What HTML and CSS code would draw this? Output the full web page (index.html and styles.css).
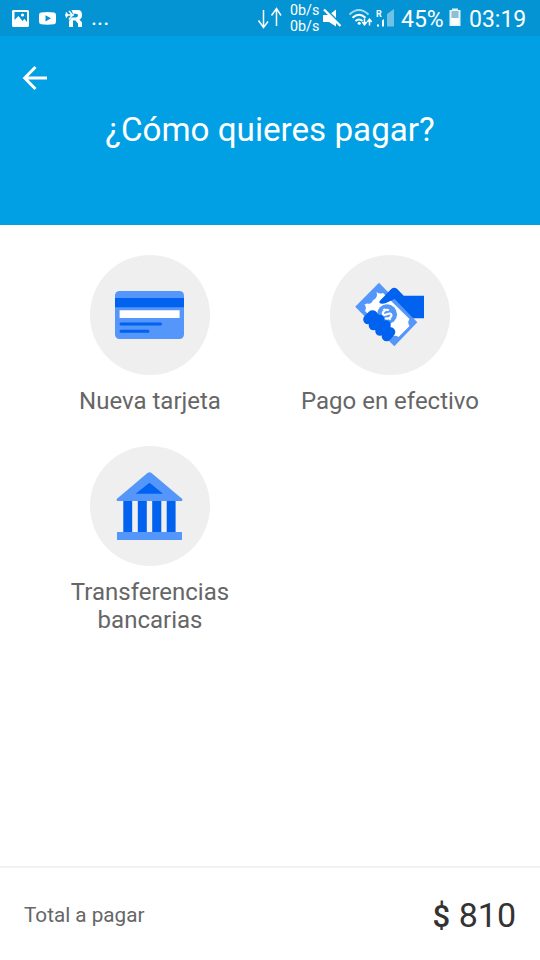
FILE: index.html
```html
<!DOCTYPE html>
<html lang="es">
<head>
  <meta charset="UTF-8" />
  <meta name="viewport" content="width=device-width, initial-scale=1.0"/>
  <title>¿Cómo quieres pagar?</title>
  <link rel="stylesheet" href="styles.css">
</head>
<body>
  <div class="status-bar">
    <svg class="status-left" width="90" height="36" viewBox="0 0 90 36" fill="#fff">
      <path fill-rule="evenodd" d="M13 10h15l1 1v15l-1 1H13l-1-1V11zM14.500 12v8l4-4 4 5 2-2 2.500 3V12z"/>
      <circle cx="22.500" cy="15" r="1.600"/>
      <path fill-rule="evenodd" d="M41 12.500q6.500-1 13 0 2 .3 2 2.500v6.500q0 2.500-2 2.800-6.500.8-13 0-2-.3-2-2.800V15q0-2.200 2-2.500zM45.500 15.200v6.300l5.500-3.200z"/>
      <path d="M71.500 10h6.500q4 0 4 5 0 3.500-2.500 4.500l2.500 3V27h-4v-3.500l-2.500-3h-2.500V27H69v-6l3-3.500h4q2-.3 2-2t-2-1.800h-3z"/>
      <path d="M65 15h9M69 11l3.500 4-3.500 4.500M66 12.500l1.500 2.500-1.500 2.500" fill="none" stroke="#fff" stroke-width="1.500"/>
    </svg>
    <span class="dots">...</span>

    <svg class="arrows" width="25" height="36" viewBox="0 0 25 36" fill="none" stroke="#fff" stroke-width="1.500">
      <path d="M6.500 10v17.500M1.500 20.500l5 7 4.500-6M19.500 26V9.500M14.500 15.500l5-7 4.500 7"/>
    </svg>
    <div class="speed"><span>0b/s</span><span>0b/s</span></div>
    <svg class="signals" width="74" height="36" viewBox="0 0 74 36">
      <path d="M2 15h6l7-5.500v17L8 22H2z" fill="#fff"/>
      <path d="M4 8.500l17 17" stroke="#0494d3" stroke-width="2"/>
      <path d="M3 9.500l16.500 16.500" stroke="#fff" stroke-width="2.300"/>
      <g fill="none" stroke="#fff" stroke-width="1.900">
        <path d="M28.500 14.500q9.500-9 19 0" stroke="#a5daf1"/>
        <path d="M31.500 17.700q6.500-6 13 0M34.500 21q3.500-3 7 0"/>
      </g>
      <circle cx="38.200" cy="23.300" r="1.500" fill="#fff"/>
      <path d="M43.500 18.500v6M41.300 22l2.200 2.800 2.200-2.800M48.500 25.500v-6M46.300 22l2.200-2.800 2.200 2.800" fill="none" stroke="#fff" stroke-width="1.500"/>
      <path d="M66 26.500V14l7-5v17.500z" fill="#6fc1e6"/>
      <path d="M56 26.500v-2h2v2zM61 26.500v-6l2-1.500v7.500z" fill="#fff"/>
      <text class="roaming" x="55" y="16.500">R</text>
    </svg>
    <span class="percent">45%</span>
    <svg class="battery" width="12" height="36" viewBox="0 0 12 36">
      <path d="M3 8.500h6v1.500h2.500v16H.5V10H3z" fill="#e6f5fb"/>
      <path d="M2.500 11h7v7h-7z" fill="#8ec0d4"/>
      <path d="M2.500 18h7v6.500h-7z" fill="#fff"/>
    </svg>
    <span class="time">03:19</span>
  </div>

  <header class="header">
    <a class="back" href="#" aria-label="Volver">
      <svg width="26" height="26" viewBox="0 0 26 26" fill="none" stroke="#fff" stroke-width="3">
        <path d="M25 13H3M13.500 2L2.700 13l10.800 11"/>
      </svg>
    </a>
    <h1>¿Cómo quieres pagar?</h1>
  </header>

  <main class="options">
    <div class="option">
      <svg class="icon" viewBox="0 0 120 120">
        <rect x="25" y="36" width="69" height="48" rx="4.500" fill="#5596fa"/>
        <path d="M25 43h69v9.300H25z" fill="#0062ef"/>
        <path d="M29.600 55.300h60V63h-60z" fill="#fff"/>
        <path d="M31 68.900h39.500M31 76.300h27" stroke="#0062ef" stroke-width="3" stroke-linecap="round"/>
      </svg>
      <span>Nueva tarjeta</span>
    </div>

    <div class="option">
      <svg class="icon" viewBox="0 0 120 120">
        <path d="M49 27.700L25.200 51.700l39.100 39.600 23-24z" fill="#5596fa"/>
        <path d="M46.500 37q3 2.500 6.500 1L79.500 64q-2.500 3.500 0 7L68.500 82q-3.500-2.500-7 0L35 56q2-3.500-.5-6.500l2.500-1q4 1 5-1.500t3-3q3-3 1.500-7z" fill="#fff"/>
        <circle cx="57" cy="59.200" r="10" fill="#5596fa"/>
        <g transform="translate(57 59.200) rotate(-32)" fill="none" stroke="#fff" stroke-width="2.100">
          <path d="M3.500-2.200Q2.800-4.300 0-4.300q-3.300 0-3.300 2.200Q-3.300-.5 0 0q3.500.6 3.500 2.200Q3.500 4.400 0 4.400q-2.800 0-3.500-2.200M0-4.300v-2.200M0 4.400v2.200"/>
        </g>
        <path d="M49.700 46l11.500-12q3-2.500 6 0l6.500 6.700H94v22.600H83L64.500 44 56 48q-3 1-5.500.5-2-1-.8-2.500z" fill="#0062ef"/>
        <path d="M42 60l18 19" stroke="#0062ef" stroke-width="10"/>
        <path d="M38 64.500l4.500-4.500M43.500 70.500l6-6M50 76l6-6M56.500 81.500l4-4.500" stroke="#0062ef" stroke-width="9.600" stroke-linecap="round"/>
      </svg>
      <span>Pago en efectivo</span>
    </div>

    <div class="option">
      <svg class="icon" viewBox="0 0 120 120">
        <path d="M57.800 26.800q1.700-1.300 3.400 0L92 52.800q1 1 0 2.300H27q-1-1.300 0-2.300z" fill="#5596fa"/>
        <path d="M59.500 36.700L73 47.700H45.700z" fill="#0062ef"/>
        <path d="M33.300 55.100h8.900V86h-8.900zM47.800 55.100h9V86h-9zM62.200 55.100h9.100V86h-9.100zM76.700 55.100h8.900V86h-8.900z" fill="#0062ef"/>
        <path d="M27 86h65v8H27z" fill="#5596fa"/>
      </svg>
      <span>Transferencias bancarias</span>
    </div>
  </main>

  <footer class="total">
    <span class="total-label">Total a pagar</span>
    <span class="total-amount"><b>$</b> 810</span>
  </footer>
</body>
</html>
```
FILE: styles.css
```css
* {
  box-sizing: border-box;
}

body {
  font-family: Roboto, sans-serif;
  background: #fff;
  color: #666;
  display: flex;
  flex-direction: column;
  height: 100vh;
  margin: 0;
  overflow: hidden;
}

svg {
  display: block;
  flex-shrink: 0;
}

.status-bar {
  display: flex;
  align-items: center;
  height: 36px;
  flex-shrink: 0;
  background: #0494d3;
  color: #fff;
  font-size: 23px;
  line-height: 36px;
  white-space: nowrap;
}

.dots {
  width: 20px;
  margin-left: 1px;
}

.arrows {
  margin-left: 146px;
}

.speed {
  display: flex;
  flex-direction: column;
  width: 32px;
  margin-left: 8px;
  font-size: 14.3px;
  line-height: 16px;
}

.signals {
  margin-left: -1px;
}

.roaming {
  fill: #fff;
  font-size: 9px;
  font-weight: bold;
}

.percent {
  width: 47px;
  margin-left: 6px;
  padding-top: 3px;
}

.battery {
  margin-left: 1px;
}

.time {
  margin-left: 8px;
  padding-top: 3px;
}

.header {
  height: 189px;
  flex-shrink: 0;
  padding-top: 29px;
  background: #019fe4;
  color: #fff;
}

.back {
  display: block;
  width: 26px;
  margin-left: 22px;
}

h1 {
  margin: 18px 0 0;
  font-size: 33.2px;
  font-weight: 400;
  line-height: 42px;
  text-align: center;
}

.options {
  flex: 1;
  display: grid;
  grid-template-columns: repeat(2, 240px);
  justify-content: center;
  align-content: start;
  row-gap: 31px;
  padding-top: 30px;
}

.option {
  display: flex;
  flex-direction: column;
  align-items: center;
  font-size: 24px;
  line-height: 28px;
  text-align: center;
}

.option span {
  max-width: 200px;
  margin-top: 12px;
}

.icon {
  width: 120px;
  height: 120px;
  border-radius: 50%;
  background: #efefef;
}

.total {
  display: flex;
  align-items: center;
  justify-content: space-between;
  height: 94px;
  padding: 2px 24px 0;
  border-top: 2px solid #f2f2f2;
}

.total-label {
  font-size: 20.7px;
}

.total-amount {
  color: #333;
  font-size: 34px;
}

.total-amount b {
  font-weight: 500;
  font-size: 31px;
}
```
